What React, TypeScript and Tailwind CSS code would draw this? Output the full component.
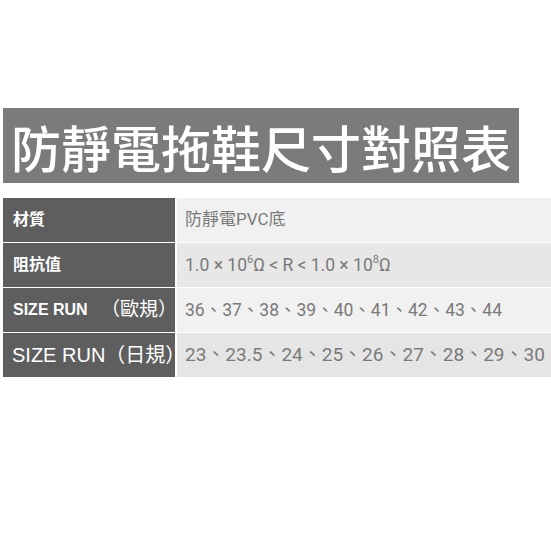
const rows = [
  { label: <span className="text-[16px] font-bold">材質</span>, value: "防靜電PVC底", bg: "bg-[#f1f1f1]", size: "text-[17px]" },
  {
    label: <span className="text-[16px] font-bold">阻抗值</span>,
    value: (
      <>
        1.0 × 10<sup className="text-[11px] -top-[0.45em]">6</sup>Ω &lt; R &lt; 1.0 × 10
        <sup className="text-[11px] -top-[0.45em]">8</sup>Ω
      </>
    ),
    bg: "bg-[#e7e7e7]",
    size: "text-[17.5px]",
  },
  {
    label: (
      <span className="flex w-full items-center justify-between">
        <span className="text-[16px] font-bold font-['Liberation_Sans','Noto_Sans_CJK_TC',sans-serif]">SIZE RUN</span>
        <span className="text-[19px] -mr-[4px]">（歐規）</span>
      </span>
    ),
    value: "36、37、38、39、40、41、42、43、44",
    bg: "bg-[#f1f1f1]",
    size: "text-[17.5px]",
  },
  {
    label: (
      <span className="text-[20px] -ml-[1px] whitespace-nowrap font-['Liberation_Sans','Noto_Sans_CJK_TC',sans-serif]">
        SIZE RUN（日規）
      </span>
    ),
    value: "23、23.5、24、25、26、27、28、29、30",
    bg: "bg-[#e5e5e5]",
    size: "text-[19px]",
  },
];

export default function App() {
  return (
    <div className="w-[551px] h-[547px] bg-white pt-[108px] pl-[3px] font-['Roboto','Noto_Sans_CJK_TC',sans-serif] overflow-hidden">
      {/* title bar */}
      <div className="w-[516px] h-[75px] bg-[#7b7b7b] flex items-center pl-[8px] text-white text-[50px] font-medium leading-none whitespace-nowrap font-['Noto_Sans_CJK_TC',sans-serif]">
        防靜電拖鞋尺寸對照表
      </div>

      {/* spec table */}
      <div className="mt-[15px] w-[548px] grid grid-cols-[172px_1fr] gap-x-[2px] gap-y-[1px] bg-white">
        {rows.map((r, i) => (
          <div key={i} className="contents">
            <div className="h-[44px] bg-[#5e5e5e] text-white flex items-center pl-[10px] pr-[2px]">{r.label}</div>
            <div className={`h-[44px] ${r.bg} text-[#7a7a7a] flex items-center pl-[8px] whitespace-nowrap ${r.size}`}>
              {r.value}
            </div>
          </div>
        ))}
      </div>
    </div>
  );
}
